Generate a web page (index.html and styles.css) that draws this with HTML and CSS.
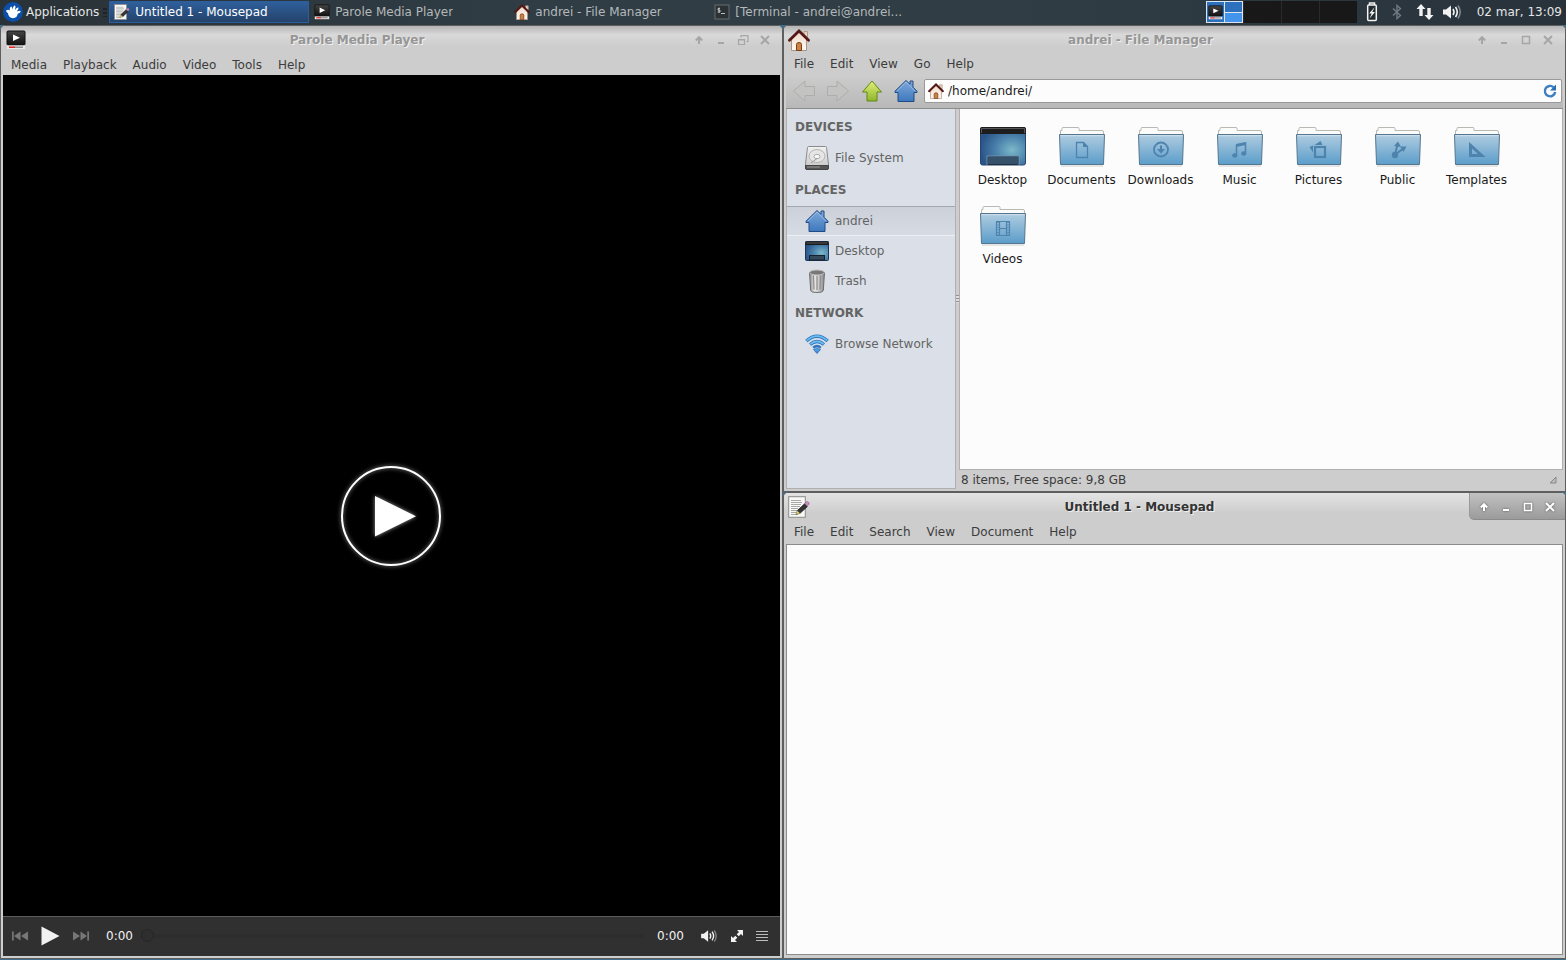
FILE: index.html
```html
<!DOCTYPE html>
<html lang="en">

<head>
    <meta charset="UTF-8" />
    <meta name="viewport" content="width=device-width, initial-scale=1.0" />
    <title>Xfce Desktop</title>
    <link rel="stylesheet" href="styles.css">
</head>

<body>
    <!-- shared icons -->
    <svg class="defs" aria-hidden="true">
        <defs>
            <linearGradient id="g-folder" x1="0" y1="0" x2="0" y2="1">
                <stop offset="0" stop-color="#b0cce0" />
                <stop offset="1" stop-color="#5b9dca" />
            </linearGradient>
            <linearGradient id="g-blue" x1="0" y1="0" x2="0" y2="1">
                <stop offset="0" stop-color="#7fa9da" />
                <stop offset="1" stop-color="#3d78bd" />
            </linearGradient>
            <linearGradient id="g-green" x1="0" y1="0" x2="0" y2="1">
                <stop offset="0" stop-color="#e2f07c" />
                <stop offset="1" stop-color="#8fb52a" />
            </linearGradient>
            <linearGradient id="g-wall" x1="0" y1="0" x2="0" y2="1">
                <stop offset="0" stop-color="#efd9c8" />
                <stop offset="1" stop-color="#fffaf4" />
            </linearGradient>
            <linearGradient id="g-dark" x1="0" y1="0" x2="0" y2="1">
                <stop offset="0" stop-color="#444" />
                <stop offset="1" stop-color="#111" />
            </linearGradient>
            <linearGradient id="g-disk" x1="0" y1="0" x2="0" y2="1">
                <stop offset="0" stop-color="#f2f2f2" />
                <stop offset="1" stop-color="#c4c4c4" />
            </linearGradient>
            <linearGradient id="g-can" x1="0" y1="0" x2="1" y2="0">
                <stop offset="0" stop-color="#8a8a8a" />
                <stop offset="0.35" stop-color="#e8e8e8" />
                <stop offset="0.65" stop-color="#c4c4c4" />
                <stop offset="1" stop-color="#858585" />
            </linearGradient>
            <linearGradient id="g-wifi" x1="0" y1="0" x2="0" y2="1">
                <stop offset="0" stop-color="#62b9ec" />
                <stop offset="1" stop-color="#2f74c4" />
            </linearGradient>
            <radialGradient id="g-screen" cx="0.7" cy="0.6" r="0.7">
                <stop offset="0" stop-color="#7cb9c9" />
                <stop offset="0.5" stop-color="#4c83ad" />
                <stop offset="1" stop-color="#2b5489" />
            </radialGradient>
        </defs>

        <symbol id="i-player" viewBox="0 0 20 20">
            <rect x="1" y="1" width="18" height="14" rx="1" fill="url(#g-dark)" stroke="#111" />
            <path d="M7 4.5l7 3.3-7 3.3z" fill="#fff" />
            <rect x="1" y="15.5" width="18" height="3.5" fill="#e9e9e9" />
            <path d="M3 17.2h6" stroke="#d11" stroke-width="1.4" />
            <path d="M9 17.2h8" stroke="#888" stroke-width="1.4" />
        </symbol>
        <symbol id="i-house" viewBox="0 0 22 22">
            <path d="M16 2.5h3.5V8H16z" fill="#e6d2c4" stroke="#b59a86" />
            <path d="M3.5 10L11 3l7.5 7v11.5h-15z" fill="url(#g-wall)" stroke="#ad9482" />
            <path d="M8.5 21.5v-6q0-2 2.5-2t2.5 2v6z" fill="#c98345" stroke="#7c3d16" />
            <path d="M1.5 11.2L11 2l9.5 9.200" fill="none" stroke="#541818" stroke-width="2.8" stroke-linecap="round" />
        </symbol>
        <symbol id="i-note" viewBox="0 0 22 22">
            <rect x="0.7" y="0.7" width="16.6" height="20.6" fill="#f7f7f5" stroke="#8b8b88" />
            <path d="M3 4.5h10M3 6.5h11M3 8.5h10M3 10.5h9M3 12.5h7M3 14.5h6M3 16.5h5M3 18.5h7" stroke="#a9a9a9" />
            <path d="M8 18.5l1.2-4 3 2.8z" fill="#e9dc70" stroke="#66602b" stroke-width="0.6" />
            <path d="M9.5 14.3l7-6.5 2.8 2.9-7 6.4z" fill="#333" stroke="#111" stroke-width="0.6" />
            <path d="M16.7 7.6l1.8-1.7q1-.7 2 .4t.4 2l-1.700 1.800z" fill="#c98fbf" stroke="#814a78" stroke-width="0.6" />
        </symbol>
        <symbol id="i-home-blue" viewBox="0 0 24 24">
            <path d="M12 1.5l4 3.8V2h3v6.2l4 4v1.3h-3V22.5H4V13.5H1v-1.3z" fill="url(#g-blue)" stroke="#204a87" stroke-linejoin="round" />
            <path d="M12 3l-9 9.2M12 3l9 9.200" stroke="#a5c4e8" stroke-width="0.8" fill="none" />
        </symbol>
        <symbol id="i-desktop-sm" viewBox="0 0 24 20">
            <rect x="0.5" y="0.5" width="23" height="19" rx="1" fill="url(#g-screen)" stroke="#1c3556" />
            <path d="M0.5 0.5h23v3.500h-23z" fill="#1a1a1a" />
            <path d="M1.5 2h21" stroke="#777" stroke-width="0.7" />
            <rect x="4.5" y="14.5" width="15" height="4.500" fill="#34495a" stroke="#16212e" />
        </symbol>
        <symbol id="i-desktop" viewBox="0 0 48 42">
            <rect x="1.5" y="2.5" width="45" height="37.5" rx="2" fill="url(#g-screen)" stroke="#24466f" />
            <path d="M1 4q0-2 2-2h42q2 0 2 2v5H1z" fill="#1d1d1d" />
            <path d="M2.5 8V3.5h43V8" fill="none" stroke="#666" stroke-width="0.8" />
            <rect x="8.5" y="31.5" width="31" height="8" fill="#36526b" stroke="#1f2f40" />
            <path d="M8 40v-9h32v9" fill="none" stroke="#6f95b3" />
        </symbol>
        <symbol id="i-folder" viewBox="0 0 48 42">
            <path d="M3 41h42" stroke="#ddd" stroke-width="1.5" />
            <path d="M2.5 12V5.5h1.5V3.5q0-1 1-1h15q1 0 1 1v2h23q1.500 0 1.500 1.500v5z" fill="#fbfbf9" stroke="#b9b9b4" />
            <path d="M1.5 9.5h45l-1 30h-43z" fill="url(#g-folder)" stroke="#55768f" stroke-linejoin="round" />
            <path d="M2.5 10.7h43" stroke="#cfe1ee" />
        </symbol>
        <symbol id="i-drive" viewBox="0 0 24 24">
            <path d="M2.5 1.5q0-1 1-1h17q1 0 1 1l2 16.500v4q0 1.500-1.500 1.500H2q-1.500 0-1.500-1.500v-4z" fill="url(#g-disk)" stroke="#8a8a8a" />
            <path d="M0.5 19.5h23v2.5q0 1.500-1.500 1.500H2q-1.500 0-1.500-1.500z" fill="#555" stroke="#444" />
            <path d="M2 21h13" stroke="#999" />
            <ellipse cx="12" cy="10" rx="8" ry="6.5" fill="#e5e5e5" stroke="#b5b5b5" />
            <ellipse cx="12" cy="10.5" rx="3" ry="2.2" fill="#f9f9f9" stroke="#aaa" />
            <path d="M6 17l6-4.500" stroke="#999" />
        </symbol>
        <symbol id="i-trash" viewBox="0 0 24 24">
            <path d="M4.5 3.5l1.2 18q.3 2 6.300 2t6.300-2l1.200-18z" fill="url(#g-can)" stroke="#6d6d6d" />
            <path d="M8.5 6.5l.5 14M12 7v14M15.500 6.500l-.5 14" stroke="#8d8d8d" stroke-width="1.2" />
            <ellipse cx="12" cy="3.5" rx="7.3" ry="2.5" fill="#777" stroke="#bcbcbc" />
        </symbol>
        <symbol id="i-wifi" viewBox="0 0 24 20">
            <g fill="none" stroke="#2f77bf" stroke-width="3.4">
                <path d="M1.300 7Q12-2.500 22.700 7" />
                <path d="M5 10.500Q12 4.500 19 10.500" />
                <path d="M8.200 13.700Q12 10.500 15.800 13.700" stroke-width="2.600" />
            </g>
            <g fill="none" stroke="#6dbcf0" stroke-width="1.6">
                <path d="M1.600 6.700Q12-2.500 22.400 6.700" />
                <path d="M5.300 10.200Q12 4.500 18.700 10.200" />
            </g>
            <path d="M8.500 15.500q3.500-2 7 0L12 19.500z" fill="url(#g-wifi)" stroke="#2d6cb5" stroke-width="0.8" />
        </symbol>
        <symbol id="i-volume" viewBox="0 0 20 16">
            <path d="M1 5.5h3L9 1.5v13L4 10.5H1z" fill="currentColor" />
            <path d="M11 5q2 3 0 6" fill="none" stroke="currentColor" stroke-width="1.6" />
            <path d="M13.5 3q3.500 5 0 10" fill="none" stroke="currentColor" stroke-width="1.6" />
            <path d="M16 1.5q4.500 6.500 0 13" fill="none" stroke="currentColor" stroke-width="1.5" opacity="0.45" />
        </symbol>
        <symbol id="i-shade" viewBox="0 0 12 12">
            <path d="M6 10V4M2.800 6.500l3.200-3.300 3.200 3.300" fill="none" stroke="currentColor" stroke-width="2" />
        </symbol>
        <symbol id="i-min" viewBox="0 0 12 12">
            <path d="M3 9h6" stroke="currentColor" stroke-width="2" />
        </symbol>
        <symbol id="i-max" viewBox="0 0 12 12">
            <path d="M2.500 2.500h7V9.500h-7z" fill="none" stroke="currentColor" stroke-width="1.500" />
        </symbol>
        <symbol id="i-restore" viewBox="0 0 12 12">
            <path d="M1.5 5.5h6v5h-6zM1 6h7M4 3.5V1.7h7v5.800H9.500" fill="none" stroke="currentColor" stroke-width="1.2" />
        </symbol>
        <symbol id="i-close" viewBox="0 0 12 12">
            <path d="M2 2l8 8M10 2l-8 8" stroke="currentColor" stroke-width="2" />
        </symbol>
    </svg>

    <header class="panel">
        <button class="menu-button">
            <svg width="20" height="20" viewBox="0 0 20 20">
                <circle cx="10" cy="10" r="10" fill="#0b4fa8" />
                <path transform="rotate(14 10 10)" d="M2.800 10.500Q4.500 8.300 6.500 9.300Q5.500 6 7 5.200Q8.300 5.500 8.800 8Q8.700 4 10.300 3.300Q11.700 4 11.300 7.800Q12.500 4.200 14.300 4.400Q15 5.800 13.500 8.500Q16 6.500 17.300 7.300Q17.500 8.800 15 10.500Q15.500 14.500 11.500 16Q7 17 5.500 12.500Q4 12 2.800 10.500z" fill="#fff" />
            </svg>
            Applications
        </button>
        <span class="grip"></span>
        <nav class="tasks">
            <button class="task active"><svg width="16" height="16"><use href="#i-note" /></svg><span>Untitled 1 - Mousepad</span></button>
            <button class="task"><svg width="16" height="16"><use href="#i-player" /></svg><span>Parole Media Player</span></button>
            <button class="task"><svg width="16" height="16"><use href="#i-house" /></svg><span>andrei - File Manager</span></button>
            <button class="task">
                <svg width="16" height="16" viewBox="0 0 16 16">
                    <rect x="1" y="1" width="14" height="14" fill="#2b3235" stroke="#686c6e" />
                    <path d="M6 4.5H4v1.700h2V8H3.700M5 3.500V9M7 9.500h4" fill="none" stroke="#bbb" />
                </svg>
                <span>[Terminal - andrei@andrei...</span>
            </button>
        </nav>
        <div class="pager">
            <button class="workspace current" aria-label="Workspace 1">
                <span class="mini mini-tall"><svg width="15" height="15"><use href="#i-player" /></svg></span>
                <span class="mini"></span>
                <span class="mini mini-active"></span>
            </button>
            <button class="workspace" aria-label="Workspace 2"></button>
            <button class="workspace" aria-label="Workspace 3"></button>
            <button class="workspace" aria-label="Workspace 4"></button>
        </div>
        <div class="tray">
            <svg width="12" height="20" viewBox="0 0 12 20">
                <path d="M3.5 3V1h5v2" fill="none" stroke="#eee" stroke-width="1.5" />
                <rect x="1.7" y="3" width="8.6" height="15.5" rx="1" fill="#222b30" stroke="#f4f4f4" stroke-width="1.5" />
                <path d="M8.7 5l-5.500 6.500h2.500L3.500 16.500 9 10H6.300z" fill="#f4f4f4" />
            </svg>
            <svg width="10" height="16" viewBox="0 0 10 16">
                <path d="M1 4.500l7.500 7L5 14.500v-13l3.500 3L1 11.500" fill="none" stroke="#717a80" stroke-width="1.4" />
            </svg>
            <svg width="18" height="18" viewBox="0 0 18 18">
                <path d="M5 1l4.500 5H6.700v7H3.300V6H.5zM13 17l-4.500-5h2.800V5h3.400v7h2.800z" fill="#f2f2f2" />
            </svg>
            <svg class="tray-volume" width="20" height="16"><use href="#i-volume" /></svg>
        </div>
        <time class="clock">02 mar, 13:09</time>
    </header>

    <main class="desktop">
        <section class="window player">
            <div class="titlebar">
                <svg width="20" height="20"><use href="#i-player" /></svg>
                <h1>Parole Media Player</h1>
                <div class="controls">
                    <button aria-label="Shade"><svg width="12" height="12"><use href="#i-shade" /></svg></button>
                    <button aria-label="Minimize"><svg width="12" height="12"><use href="#i-min" /></svg></button>
                    <button aria-label="Restore"><svg width="12" height="12"><use href="#i-restore" /></svg></button>
                    <button aria-label="Close"><svg width="12" height="12"><use href="#i-close" /></svg></button>
                </div>
            </div>
            <nav class="menubar">
                <button>Media</button>
                <button>Playback</button>
                <button>Audio</button>
                <button>Video</button>
                <button>Tools</button>
                <button>Help</button>
            </nav>
            <div class="screen">
                <button class="big-play" aria-label="Play">
                    <svg width="120" height="120" viewBox="0 0 120 120">
                        <circle cx="59" cy="60" r="49" fill="none" stroke="#fff" stroke-width="2" />
                        <path d="M43 40v40.500l41-20.200z" fill="#fff" />
                    </svg>
                </button>
            </div>
            <div class="playbar">
                <button aria-label="Previous">
                    <svg width="18" height="12" viewBox="0 0 18 12">
                        <path d="M1 1.5h1.700v9H1zM9.500 1.500v9L3 6zM17 1.500v9L10 6z" fill="#777" />
                    </svg>
                </button>
                <button aria-label="Play">
                    <svg width="19" height="20" viewBox="0 0 19 20">
                        <path d="M0.500 0.500v19L18.500 10z" fill="#f2f2f2" />
                    </svg>
                </button>
                <button aria-label="Next">
                    <svg width="18" height="12" viewBox="0 0 18 12">
                        <path d="M17 1.5h-1.700v9H17zM8.500 1.500v9L15 6zM1 1.500v9L8 6z" fill="#777" />
                    </svg>
                </button>
                <span class="elapsed">0:00</span>
                <input class="seek" type="range" min="0" max="100" value="0" aria-label="Seek">
                <span class="total">0:00</span>
                <button aria-label="Volume"><svg width="18" height="14"><use href="#i-volume" /></svg></button>
                <button aria-label="Fullscreen">
                    <svg width="14" height="14" viewBox="0 0 14 14">
                        <path d="M7 1h6v6l-2-2-2.300 2.300-2-2L9 3zM7 13H1V7l2 2 2.300-2.300 2 2L5 11z" fill="#f2f2f2" />
                    </svg>
                </button>
                <button aria-label="Playlist">
                    <svg width="12" height="12" viewBox="0 0 12 12">
                        <path d="M0 1.500h12M0 4.500h12M0 7.500h12M0 10.500h12" stroke="#bbb" />
                    </svg>
                </button>
            </div>
        </section>

        <section class="window files">
            <div class="titlebar">
                <svg width="22" height="22"><use href="#i-house" /></svg>
                <h1>andrei - File Manager</h1>
                <div class="controls">
                    <button aria-label="Shade"><svg width="12" height="12"><use href="#i-shade" /></svg></button>
                    <button aria-label="Minimize"><svg width="12" height="12"><use href="#i-min" /></svg></button>
                    <button aria-label="Maximize"><svg width="12" height="12"><use href="#i-max" /></svg></button>
                    <button aria-label="Close"><svg width="12" height="12"><use href="#i-close" /></svg></button>
                </div>
            </div>
            <nav class="menubar">
                <button>File</button>
                <button>Edit</button>
                <button>View</button>
                <button>Go</button>
                <button>Help</button>
            </nav>
            <div class="toolbar">
                <button aria-label="Back" disabled>
                    <svg width="24" height="24" viewBox="0 0 24 24">
                        <path d="M1.5 12L13 2v5.500h9.500v9H13V22z" fill="#c3c3c1" stroke="#adadab" stroke-linejoin="round" />
                    </svg>
                </button>
                <button aria-label="Forward" disabled>
                    <svg width="24" height="24" viewBox="0 0 24 24">
                        <path d="M22.5 12L11 2v5.500H1.500v9H11V22z" fill="#c3c3c1" stroke="#adadab" stroke-linejoin="round" />
                    </svg>
                </button>
                <button aria-label="Up">
                    <svg width="24" height="24" viewBox="0 0 24 24">
                        <path d="M12 2l9.500 11H17v9H7v-9H2.500z" fill="url(#g-green)" stroke="#5f8a12" stroke-linejoin="round" />
                    </svg>
                </button>
                <button aria-label="Home"><svg width="24" height="24"><use href="#i-home-blue" /></svg></button>
                <div class="location">
                    <svg width="16" height="16"><use href="#i-house" /></svg>
                    <input type="text" value="/home/andrei/" aria-label="Location">
                    <button aria-label="Reload">
                        <svg width="16" height="16" viewBox="0 0 16 16">
                            <path d="M11.500 4.200A5.200 5.200 0 1 0 13.200 9" fill="none" stroke="#3f7fc0" stroke-width="2.4" />
                            <path d="M14 1.500v6H8z" fill="#2a6fb5" />
                        </svg>
                    </button>
                </div>
            </div>
            <div class="browser">
                <aside class="sidebar">
                    <h2>DEVICES</h2>
                    <a href="#"><svg width="24" height="24"><use href="#i-drive" /></svg>File System</a>
                    <h2>PLACES</h2>
                    <a href="#" class="selected"><svg width="24" height="24"><use href="#i-home-blue" /></svg>andrei</a>
                    <a href="#"><svg width="24" height="20"><use href="#i-desktop-sm" /></svg>Desktop</a>
                    <a href="#"><svg width="24" height="24"><use href="#i-trash" /></svg>Trash</a>
                    <h2>NETWORK</h2>
                    <a href="#"><svg width="24" height="20"><use href="#i-wifi" /></svg>Browse Network</a>
                </aside>
                <div class="splitter"><span></span></div>
                <div class="content">
                    <div class="icons">
                        <a href="#"><svg width="48" height="42"><use href="#i-desktop" /></svg>Desktop</a>
                        <a href="#">
                            <svg width="48" height="42" viewBox="0 0 48 42">
                                <use href="#i-folder" />
                                <path d="M18.5 17.5h7l4 4v11h-11z" fill="none" stroke="#4d83ad" stroke-width="1.3" />
                                <path d="M25 17v5h5z" fill="#4d83ad" />
                            </svg>
                            Documents
                        </a>
                        <a href="#">
                            <svg width="48" height="42" viewBox="0 0 48 42">
                                <use href="#i-folder" />
                                <circle cx="24" cy="24.5" r="7" fill="none" stroke="#4d83ad" stroke-width="1.8" />
                                <path d="M23 20.5h2V24h3l-4 4.500-4-4.500h3z" fill="#4d83ad" />
                            </svg>
                            Downloads
                        </a>
                        <a href="#">
                            <svg width="48" height="42" viewBox="0 0 48 42">
                                <use href="#i-folder" />
                                <path d="M20.5 30V20l9-1.800V28" fill="none" stroke="#4d83ad" stroke-width="1.5" />
                                <path d="M20 19l10-2v3l-10 2z" fill="#4d83ad" />
                                <ellipse cx="18.8" cy="30.5" rx="2.6" ry="2.2" fill="#4d83ad" />
                                <ellipse cx="27.8" cy="28.5" rx="2.6" ry="2.2" fill="#4d83ad" />
                            </svg>
                            Music
                        </a>
                        <a href="#">
                            <svg width="48" height="42" viewBox="0 0 48 42">
                                <use href="#i-folder" />
                                <rect x="20" y="22" width="10" height="10" fill="none" stroke="#4d83ad" stroke-width="2.2" />
                                <path d="M19.500 20l6-4 2 4zM18 20.500v7l-3.500-5.500z" fill="#4d83ad" />
                            </svg>
                            Pictures
                        </a>
                        <a href="#">
                            <svg width="48" height="42" viewBox="0 0 48 42">
                                <use href="#i-folder" />
                                <circle cx="21" cy="30" r="3.2" fill="#4d83ad" />
                                <path d="M21.5 28l2-9M22 29l8-6" stroke="#4d83ad" stroke-width="2" />
                                <path d="M20 21l4-4.500 3 5.500zM26 21.500h6.500l-3 5.500z" fill="#4d83ad" />
                            </svg>
                            Public
                        </a>
                        <a href="#">
                            <svg width="48" height="42" viewBox="0 0 48 42">
                                <use href="#i-folder" />
                                <path d="M16 17l16.500 15H16zM19 23.500v5.500h6z" fill="#4d83ad" fill-rule="evenodd" />
                            </svg>
                            Templates
                        </a>
                        <a href="#">
                            <svg width="48" height="42" viewBox="0 0 48 42">
                                <use href="#i-folder" />
                                <path d="M17.5 17.5h13v14h-13zM20.500 17.500v14M27.500 17.500v14M20.500 24.500h7" fill="none" stroke="#4d83ad" stroke-width="1.2" />
                                <path d="M19 18v14M29 18v14" stroke="#4d83ad" stroke-width="1.5" stroke-dasharray="1 1.5" />
                            </svg>
                            Videos
                        </a>
                    </div>
                    <footer class="statusbar">
                        <span>8 items, Free space: 9,8 GB</span>
                        <svg width="8" height="8" viewBox="0 0 8 8"><path d="M7 1v6H1z" fill="#bbb" stroke="#888" /></svg>
                    </footer>
                </div>
            </div>
        </section>

        <section class="window editor focused">
            <div class="titlebar">
                <svg width="22" height="22"><use href="#i-note" /></svg>
                <h1>Untitled 1 - Mousepad</h1>
                <div class="controls">
                    <button aria-label="Shade"><svg width="12" height="12"><use href="#i-shade" /></svg></button>
                    <button aria-label="Minimize"><svg width="12" height="12"><use href="#i-min" /></svg></button>
                    <button aria-label="Maximize"><svg width="12" height="12"><use href="#i-max" /></svg></button>
                    <button aria-label="Close"><svg width="12" height="12"><use href="#i-close" /></svg></button>
                </div>
            </div>
            <nav class="menubar">
                <button>File</button>
                <button>Edit</button>
                <button>Search</button>
                <button>View</button>
                <button>Document</button>
                <button>Help</button>
            </nav>
            <textarea aria-label="Document text" spellcheck="false"></textarea>
        </section>
    </main>
</body>

</html>
```
FILE: styles.css
```css
* {
    box-sizing: border-box;
}

html,
body {
    height: 100%;
    margin: 0;
}

body {
    display: flex;
    flex-direction: column;
    background: #3d6f8c;
    color: #3c3c3c;
    font-family: "DejaVu Sans", sans-serif;
    font-size: 12px;
    line-height: 16px;
}

button,
input,
textarea {
    font: inherit;
    color: inherit;
}

button {
    display: flex;
    align-items: center;
    padding: 0;
    border: none;
    background: none;
}

svg {
    flex: none;
    display: block;
}

.defs {
    position: absolute;
    width: 0;
    height: 0;
}

/* Top panel */

.panel {
    display: flex;
    align-items: center;
    height: 25px;
    padding-bottom: 1px;
    background: linear-gradient(90deg, #293237, #303d45 35%, #303d45 65%, #28323a);
    color: #e6e6e6;
}

.menu-button {
    gap: 3px;
    padding-left: 3px;
}

.grip {
    width: 4px;
    height: 9px;
    margin: 0 2px 0 4px;
    background: repeating-linear-gradient(#1d2327 0 2px, transparent 2px 4px);
}

.tasks {
    flex: 1;
    display: flex;
    min-width: 0;
}

.task {
    flex: 0 1 200px;
    gap: 5px;
    height: 22px;
    min-width: 0;
    padding: 0 4px;
    border: 1px solid transparent;
    color: #b4b8ba;
    white-space: nowrap;
}

.task span {
    overflow: hidden;
}

.task.active {
    background: linear-gradient(#2f5f9b, #25436b);
    border-color: #2c5d9c;
    color: #fff;
}

.pager {
    display: flex;
    gap: 1px;
    height: 22px;
    margin-right: 9px;
    background: #2a2a2a;
}

.workspace {
    width: 37px;
    background: #181818;
}

.workspace.current {
    display: grid;
    grid-template-columns: 1fr 1fr;
    grid-template-rows: 1fr 1fr;
    align-items: stretch;
    gap: 1px;
    padding: 1px;
    background: #dce5ee;
}

.mini {
    display: flex;
    align-items: center;
    justify-content: center;
    background: #2d70bd;
}

.mini-tall {
    grid-row: span 2;
}

.mini-active {
    background: #4394ec;
}

.tray {
    display: flex;
    align-items: center;
    gap: 14px;
    color: #f2f2f2;
}

.tray-volume {
    margin-left: -6px;
}

.clock {
    margin: 0 4px 0 15px;
}

/* Windows */

.desktop {
    flex: 1;
    display: grid;
    grid-template-columns: repeat(2, minmax(0, 1fr));
    grid-template-rows: repeat(2, minmax(0, 1fr));
    min-height: 0;
    padding-bottom: 1px;
}

.window {
    display: flex;
    flex-direction: column;
    min-height: 0;
    padding: 0 2px 2px;
    border: 1px solid #5e5e5e;
    border-radius: 5px 5px 0 0;
    background: #cdcdcd;
}

.titlebar {
    display: flex;
    align-items: center;
    flex: none;
    height: 29px;
    margin: 0 -2px;
    padding: 0 6px 2px 4px;
    border-radius: 4px 4px 0 0;
    background: linear-gradient(#b4b4b4, #d9d9d9 30%, #cdcdcd 70%);
}

.titlebar h1 {
    flex: 1;
    margin: 1px 0 0;
    color: #969696;
    font-size: 12px;
    text-align: center;
    text-shadow: 1px 1px 0 #f0f0f0;
}

.controls {
    display: flex;
    color: #a6a6a6;
}

.controls button {
    justify-content: center;
    width: 22px;
    height: 26px;
}

.focused .titlebar {
    padding-right: 0;
    background: linear-gradient(#e3e3e3, #cdcdcd 70%);
}

.focused .titlebar h1 {
    color: #333;
}

.focused .controls {
    align-self: flex-start;
    padding: 0 4px 0 3px;
    border-left: 1px solid #999;
    border-bottom: 1px solid #8b8b8b;
    border-radius: 0 4px 0 5px;
    background: linear-gradient(#c2c2c2, #9b9b9b);
    color: #fff;
}

.focused .controls svg {
    margin-top: 2px;
    filter: drop-shadow(0 0 1px #555);
}

.menubar {
    display: flex;
    flex: none;
    height: 20px;
    padding-bottom: 2px;
}

.menubar button {
    padding: 0 8px;
}

/* Media player */

.player {
    grid-row: span 2;
}

.player .titlebar {
    padding-left: 5px;
}

.player .menubar {
    padding-bottom: 1px;
}

.screen {
    flex: 1;
    display: flex;
    align-items: center;
    justify-content: center;
    min-height: 0;
    background: #000;
}

.big-play svg {
    margin-top: 40px;
    filter: drop-shadow(0 0 2px rgba(255, 255, 255, 0.6));
}

.playbar {
    display: flex;
    align-items: center;
    flex: none;
    gap: 12px;
    height: 40px;
    padding: 0 12px 2px 8px;
    border-top: 1px solid #5c5c5c;
    background: #303030;
    color: #f2f2f2;
}

.elapsed {
    margin-left: 4px;
}

.total {
    margin-right: 4px;
}

.seek {
    flex: 1;
    min-width: 0;
    height: 16px;
    margin: 0 0 0 -4px;
    appearance: none;
    background: linear-gradient(#2d2d2d, #2d2d2d) center / 100% 4px no-repeat;
}

.seek::-webkit-slider-thumb {
    appearance: none;
    width: 13px;
    height: 13px;
    border: 1px solid #262626;
    border-radius: 50%;
    background: #2e2e2e;
}

/* File manager */

.toolbar {
    display: flex;
    align-items: center;
    flex: none;
    gap: 10px;
    margin: 0;
    padding: 4px 1px 5px 6px;
    border-bottom: 1px solid #8c8c8c;
    background: linear-gradient(#cdcdcd, #b8b8b8);
}

.location {
    flex: 1;
    display: flex;
    align-items: center;
    gap: 4px;
    height: 24px;
    margin-left: -4px;
    padding: 0 3px;
    border: 1px solid #999;
    border-radius: 2px;
    background: #fcfcfc;
    color: #1a1a1a;
}

.location input {
    flex: 1;
    min-width: 0;
    padding: 0;
    border: none;
    outline: none;
    background: none;
}

.browser {
    flex: 1;
    display: flex;
    min-height: 0;
}

.sidebar {
    flex: none;
    width: 170px;
    padding-top: 1px;
    border: 1px solid #b0b0b0;
    border-top: none;
    background: #dbe0e8;
    color: #646464;
}

.sidebar h2 {
    margin: 0;
    padding: 2px 8px 0;
    font-size: 12px;
    line-height: 31px;
}

.sidebar a {
    display: flex;
    align-items: center;
    gap: 6px;
    height: 30px;
    padding-left: 18px;
    color: inherit;
    text-decoration: none;
}

.sidebar .selected {
    border-top: 1px solid #a3a8b0;
    border-bottom: 1px solid #eceff3;
    background: linear-gradient(#cbd0d9, #d6dbe4);
}

.splitter {
    flex: none;
    display: flex;
    align-items: center;
    width: 3px;
}

.splitter span {
    width: 3px;
    height: 8px;
    background: repeating-linear-gradient(#909090 0 1px, #dedede 1px 3px);
}

.content {
    flex: 1;
    display: flex;
    flex-direction: column;
    min-width: 0;
}

.icons {
    flex: 1;
    display: grid;
    grid-template-columns: repeat(auto-fill, 79px);
    grid-auto-rows: 79px;
    padding: 16px 3px;
    border: 1px solid #b0b0b0;
    border-top: none;
    background: #fcfcfc;
    color: #1a1a1a;
    overflow: hidden;
}

.icons a {
    display: flex;
    flex-direction: column;
    align-items: center;
    gap: 5px;
    color: inherit;
    text-decoration: none;
}

.statusbar {
    display: flex;
    align-items: center;
    justify-content: space-between;
    flex: none;
    height: 19px;
    padding: 0 6px 0 2px;
}

/* Text editor */

.editor .menubar {
    padding-bottom: 0;
}

.editor textarea {
    flex: 1;
    margin-top: 2px;
    margin-bottom: 1px;
    border: 1px solid #8c8c8c;
    outline: none;
    background: #fcfcfc;
    resize: none;
}
```
